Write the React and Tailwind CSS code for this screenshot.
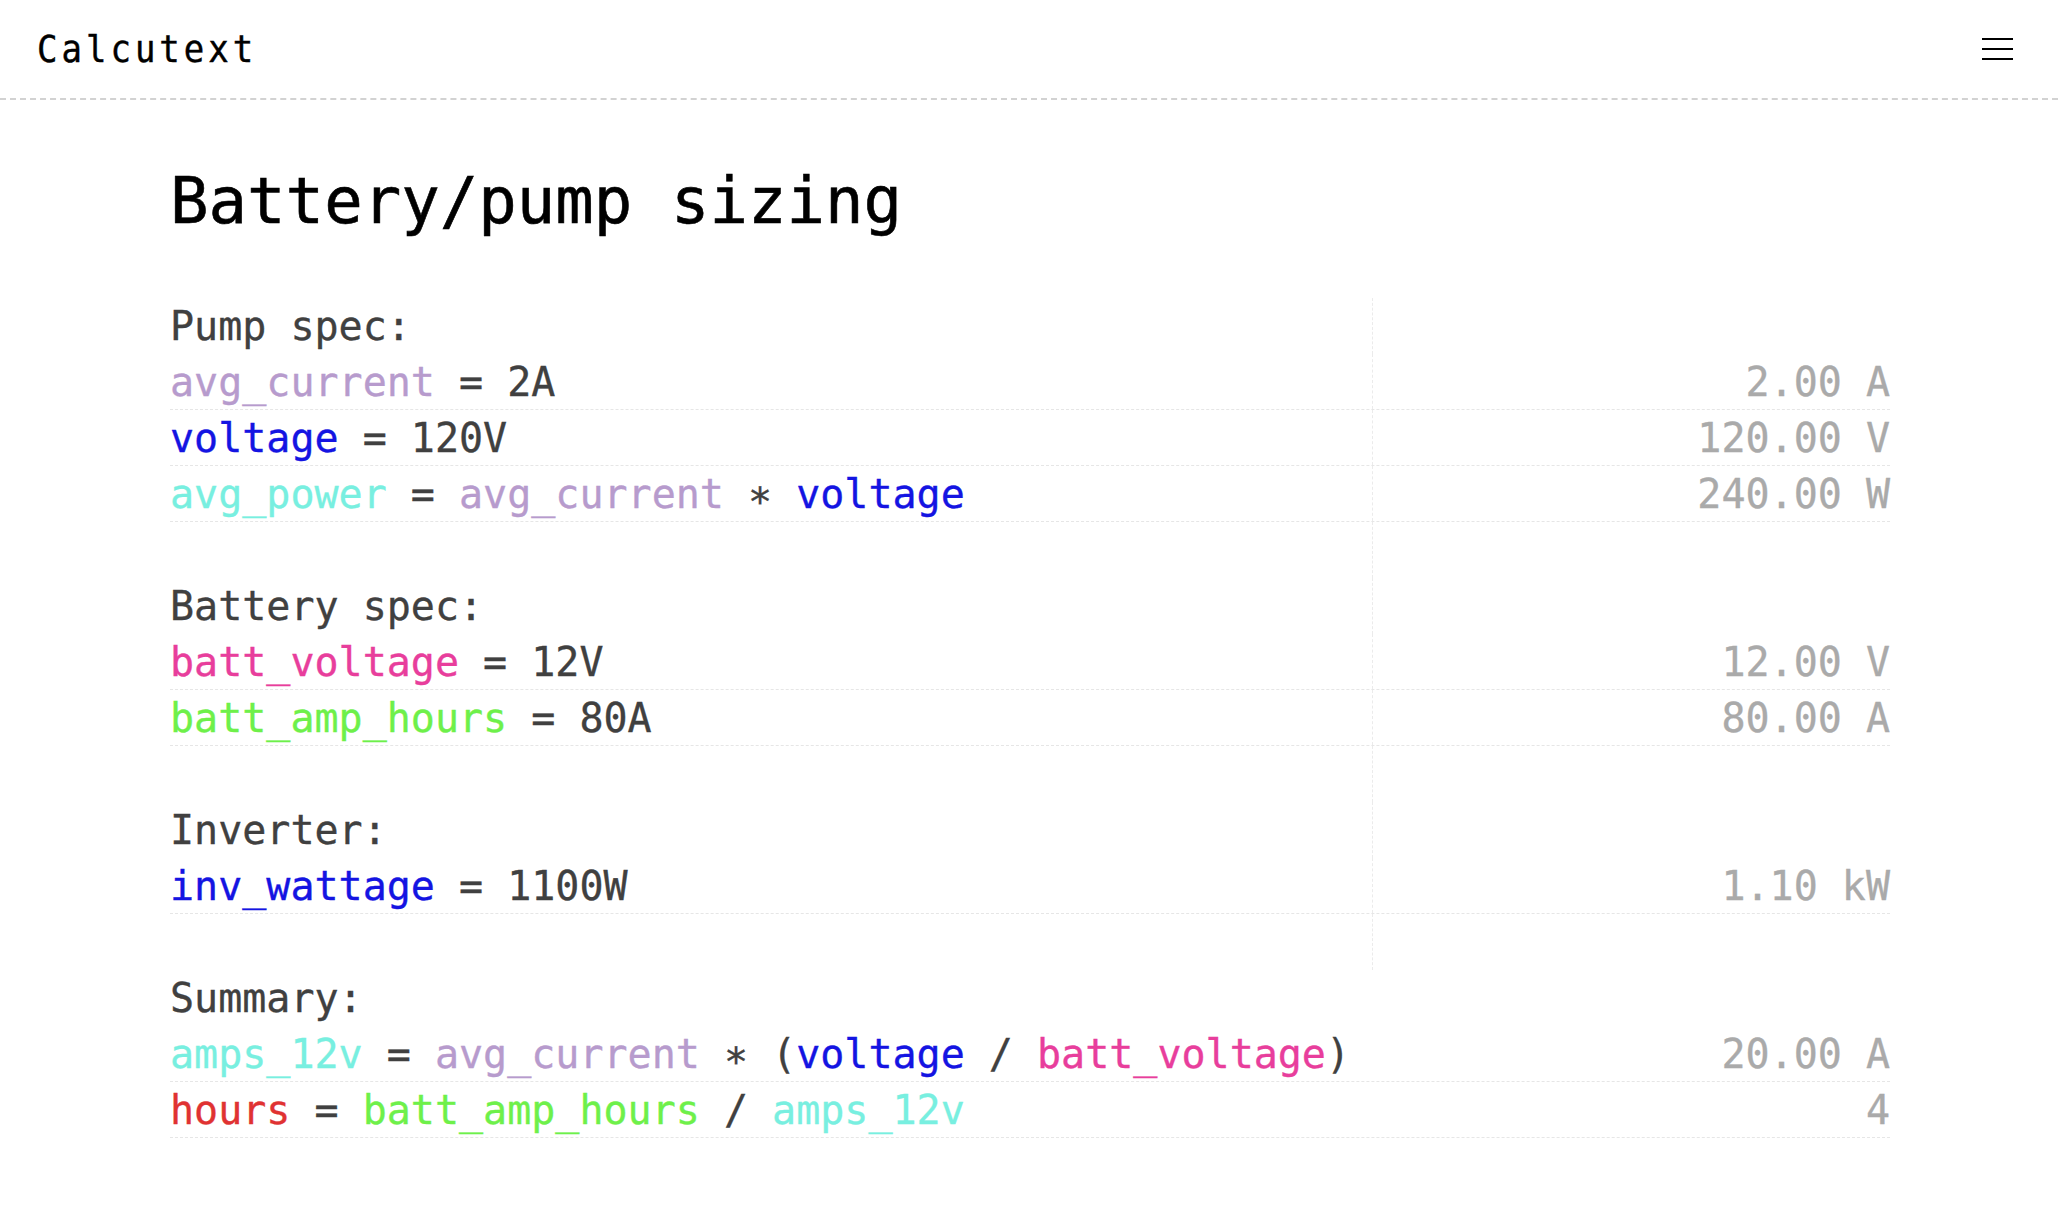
import React from "react";

const C = {
  lav: "text-[#b79bcd]",
  blue: "text-[#1414e2]",
  cyan: "text-[#78efe0]",
  pink: "text-[#e83e9c]",
  green: "text-[#6ef04a]",
  red: "text-[#e03232]",
  op: "text-[#404040]",
};

const rows = [
  { t: [["Pump spec:", C.op]] },
  { t: [["avg_current", C.lav], [" = 2A", C.op]], r: "2.00 A" },
  { t: [["voltage", C.blue], [" = 120V", C.op]], r: "120.00 V" },
  {
    t: [
      ["avg_power", C.cyan],
      [" = ", C.op],
      ["avg_current", C.lav],
      [" \u2217 ", C.op],
      ["voltage", C.blue],
    ],
    r: "240.00 W",
  },
  { t: [] },
  { t: [["Battery spec:", C.op]] },
  { t: [["batt_voltage", C.pink], [" = 12V", C.op]], r: "12.00 V" },
  { t: [["batt_amp_hours", C.green], [" = 80A", C.op]], r: "80.00 A" },
  { t: [] },
  { t: [["Inverter:", C.op]] },
  { t: [["inv_wattage", C.blue], [" = 1100W", C.op]], r: "1.10 kW" },
  { t: [] },
  { t: [["Summary:", C.op]] },
  {
    t: [
      ["amps_12v", C.cyan],
      [" = ", C.op],
      ["avg_current", C.lav],
      [" \u2217 (", C.op],
      ["voltage", C.blue],
      [" / ", C.op],
      ["batt_voltage", C.pink],
      [")", C.op],
    ],
    r: "20.00 A",
  },
  {
    t: [
      ["hours", C.red],
      [" = ", C.op],
      ["batt_amp_hours", C.green],
      [" / ", C.op],
      ["amps_12v", C.cyan],
    ],
    r: "4",
  },
];

export default function App() {
  return (
    <div
      className="min-h-[1230px] w-full bg-white text-black"
      style={{ fontFamily: '"DejaVu Sans Mono", "Liberation Mono", monospace' }}
    >
      <header className="flex h-[100px] items-start justify-between border-b-2 border-dashed border-[#d2d2d2] pl-[37px] pr-[45px]">
        <div className="origin-top-left scale-y-[1.12] pt-[26px] text-[34px] leading-none tracking-[4px] text-black [-webkit-text-stroke:0.4px_black]">
          Calcutext
        </div>
        <div className="mt-[38px] flex w-[31px] flex-col gap-[8px]">
          <div className="h-[2px] w-full bg-black" />
          <div className="h-[2px] w-full bg-black" />
          <div className="h-[2px] w-full bg-black" />
        </div>
      </header>

      <main className="ml-[170px] w-[1720px]">
        <h1 className="pt-[69px] text-[64px] leading-none text-black [-webkit-text-stroke:0.6px_black]">
          Battery/pump sizing
        </h1>
        <div className="mt-[65px]">
          {rows.map((row, i) => (
            <div
              key={i}
              className={`flex h-[56px] text-[40px] leading-[56px] whitespace-pre [-webkit-text-stroke:0.35px_currentColor] ${
                row.r ? "border-b border-dashed border-[#e6e6e6]" : ""
              }`}
            >
              <div className="w-[1202px] shrink-0">
                {row.t.length === 0 ? "\u00a0" : row.t.map(([s, c], j) => (
                  <span key={j} className={c}>
                    {s}
                  </span>
                ))}
              </div>
              <div
                className={`flex-1 text-right text-[#aaaaaa] ${
                  i < 12 ? "border-l border-dashed border-[#ebebeb]" : ""
                }`}
              >
                {row.r || ""}
              </div>
            </div>
          ))}
        </div>
      </main>
    </div>
  );
}
